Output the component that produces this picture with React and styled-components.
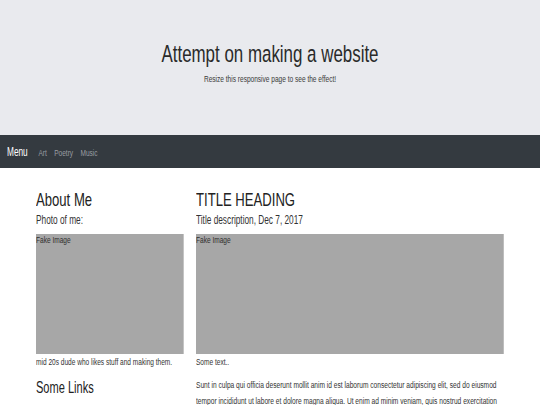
import React from "react";
import styled, { createGlobalStyle } from "styled-components";

// the reference uses a narrow grotesque; Liberation Sans squeezed on x matches it
const K = 0.69;

const GlobalStyle = createGlobalStyle`
  html, body {
    margin: 0;
    padding: 0;
    background: #ffffff;
    font-family: "Liberation Sans", Arial, sans-serif;
    overflow-x: hidden;
  }
`;

const Header = styled.header`
  height: 135px;
  box-sizing: border-box;
  padding-top: 39px;
  background: #e9eaee;
  color: #2a2a2a;
  text-align: center;
`;

const Title = styled.h1`
  margin: 0;
  font-size: 24.5px;
  font-weight: 400;
  line-height: 29px;
  transform: scaleX(${K});
`;

const Subtitle = styled.p`
  margin: 5px 0 0;
  font-size: 9.5px;
  line-height: 11px;
  color: #3a3a3a;
  transform: scaleX(${K});
`;

const Nav = styled.nav`
  height: 33px;
  background: #343a40;
  display: flex;
  align-items: center;
  padding: 1px 7px 0;
  box-sizing: border-box;
`;

const NavRow = styled.div`
  display: flex;
  align-items: baseline;
  gap: 10.6px;
  transform: scaleX(${K});
  transform-origin: left center;
`;

const Brand = styled.a`
  color: #ffffff;
  font-size: 12px;
  margin-right: 5px;
`;

const NavLink = styled.a`
  color: #9a9ea3;
  font-size: 9.5px;
`;

const Main = styled.main`
  display: flex;
  gap: 12px;
  padding: 21px 36px 0;
`;

const Column = styled.section`
  width: ${(p) => p.$width}px;
  flex-shrink: 0;
`;

const Squeeze = styled.div`
  width: calc(100% / ${K});
  transform: scaleX(${K});
  transform-origin: left top;
`;

const Heading = styled.h2`
  margin: ${(p) => p.$top || 0}px 0 0;
  font-size: ${(p) => p.$size || 19}px;
  font-weight: 400;
  line-height: ${(p) => p.$lh || 22}px;
  color: #222222;
`;

const Sub = styled.h3`
  margin: 1px 0 0;
  font-size: 12px;
  font-weight: 400;
  line-height: 16px;
  color: #333333;
`;

const FakeImage = styled.div`
  margin-top: 6px;
  height: 120px;
  background: #a7a7a7;
  font-size: 9.5px;
  line-height: 12px;
  color: #2e2e2e;
`;

const Caption = styled.p`
  margin: 2px 0 0;
  font-size: 9.5px;
  line-height: 12px;
  color: #333333;
`;

const Body = styled.p`
  margin: 9px 0 0;
  font-size: 9.6px;
  line-height: 16px;
  color: #333333;
`;

export default function App() {
  return (
    <>
      <GlobalStyle />
      <Header>
        <Title>Attempt on making a website</Title>
        <Subtitle>Resize this responsive page to see the effect!</Subtitle>
      </Header>
      <Nav>
        <NavRow>
          <Brand>Menu</Brand>
          <NavLink>Art</NavLink>
          <NavLink>Poetry</NavLink>
          <NavLink>Music</NavLink>
        </NavRow>
      </Nav>
      <Main>
        <Column $width={148}>
          <Squeeze>
            <Heading>About Me</Heading>
            <Sub>Photo of me:</Sub>
            <FakeImage>Fake Image</FakeImage>
            <Caption>mid 20s dude who likes stuff and making them.</Caption>
            <Heading $size={16} $lh={20} $top={10}>Some Links</Heading>
          </Squeeze>
        </Column>
        <Column $width={308}>
          <Squeeze>
            <Heading>TITLE HEADING</Heading>
            <Sub>Title description, Dec 7, 2017</Sub>
            <FakeImage>Fake Image</FakeImage>
            <Caption>Some text..</Caption>
            <Body>
              Sunt in culpa qui officia deserunt mollit anim id est laborum consectetur adipiscing elit, sed do eiusmod tempor incididunt ut labore et dolore magna aliqua. Ut enim ad minim veniam, quis nostrud exercitation ullamco laboris nisi ut aliquip ex ea commodo consequat.
            </Body>
          </Squeeze>
        </Column>
      </Main>
    </>
  );
}
